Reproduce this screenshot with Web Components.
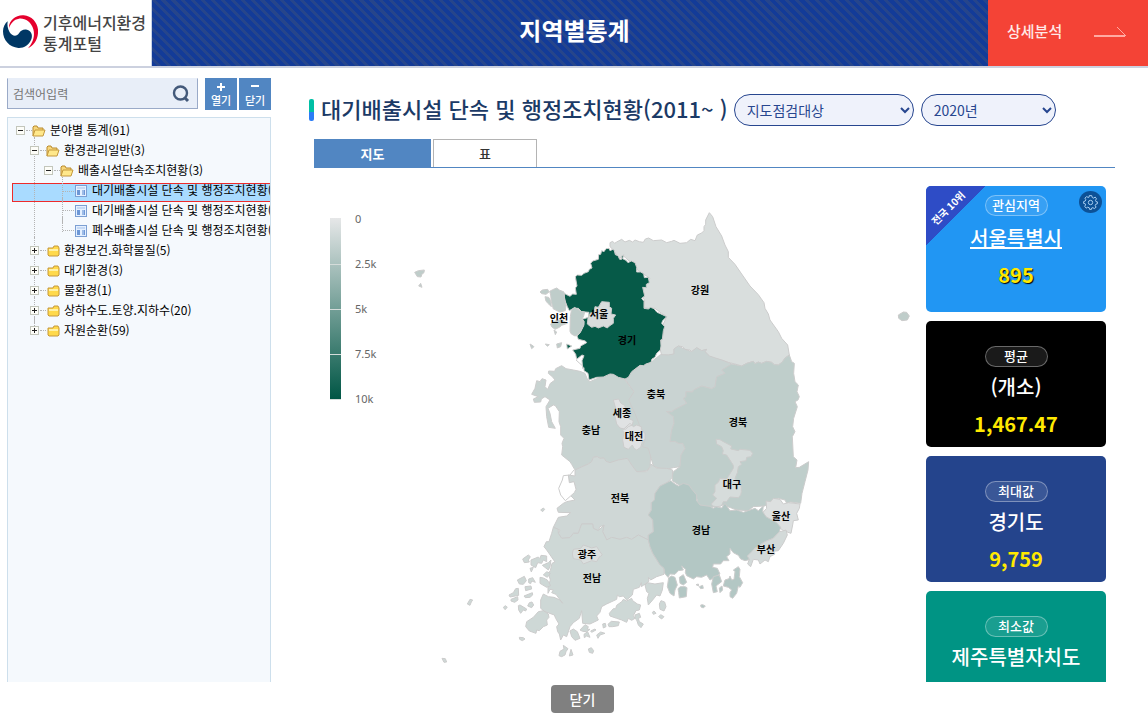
<!DOCTYPE html>
<html lang="ko">
<head>
<meta charset="utf-8">
<title>지역별통계</title>
<style>
  html, body { margin: 0; height: 100%; }
  body { font-family: "Noto Sans CJK KR", "Noto Sans", sans-serif; color: #000; background: #fff; overflow: hidden; }
</style>
</head>
<body>
<portal-app>
  <portal-header slot="header">
    <span slot="brand">기후에너지환경<br>통계포털</span>
    <span slot="title">지역별통계</span>
    <span slot="action">상세분석</span>
  </portal-header>

  <search-bar slot="side" placeholder="검색어입력"></search-bar>
  <tree-panel slot="side">
    <tree-item kind="open" depth="0" label="분야별 통계(91)">
      <tree-item kind="open" depth="1" guide label="환경관리일반(3)">
        <tree-item kind="open" depth="2" label="배출시설단속조치현황(3)">
          <tree-item kind="leaf" depth="3" guide selected label="대기배출시설 단속 및 행정조치현황(2011~ )"></tree-item>
          <tree-item kind="leaf" depth="3" guide label="대기배출시설 단속 및 행정조치현황(2001~2010)"></tree-item>
          <tree-item kind="leaf" depth="3" guide="end" label="폐수배출시설 단속 및 행정조치현황(2001~ )"></tree-item>
        </tree-item>
      </tree-item>
      <tree-item kind="closed" depth="1" guide label="환경보건.화학물질(5)"></tree-item>
      <tree-item kind="closed" depth="1" guide label="대기환경(3)"></tree-item>
      <tree-item kind="closed" depth="1" guide label="물환경(1)"></tree-item>
      <tree-item kind="closed" depth="1" guide label="상하수도.토양.지하수(20)"></tree-item>
      <tree-item kind="closed" depth="1" guide="end" label="자원순환(59)"></tree-item>
    </tree-item>
  </tree-panel>

  <page-heading>대기배출시설 단속 및 행정조치현황(2011~ )
    <pill-select slot="tools" name="항목" value="지도점검대상" style="--w:180px"></pill-select>
    <pill-select slot="tools" name="연도" value="2020년" style="--w:135px"></pill-select>
  </page-heading>
  <tab-strip></tab-strip>
  <stat-board>
    <korea-map slot="map"></korea-map>
    <stat-card featured style="--bg:#2196f3;--shadow:#000">
      <span slot="rank">전국 10위</span><span slot="tag">관심지역</span><a slot="name" href="#seoul" style="color:inherit">서울특별시</a><span slot="value">895</span>
    </stat-card>
    <stat-card style="--bg:#000">
      <span slot="tag">평균</span><span slot="name">(개소)</span><span slot="value">1,467.47</span>
    </stat-card>
    <stat-card style="--bg:#24448c">
      <span slot="tag">최대값</span><span slot="name">경기도</span><span slot="value">9,759</span>
    </stat-card>
    <stat-card style="--bg:#009484">
      <span slot="tag">최소값</span><span slot="name">제주특별자치도</span><span slot="value"></span>
    </stat-card>
  </stat-board>
  <close-button slot="footer">닫기</close-button>
</portal-app>

<script>
const define = (name, html, setup) => {
  const t = document.createElement('template');
  t.innerHTML = html;
  customElements.define(name, class extends HTMLElement {
    constructor() {
      super();
      this.attachShadow({ mode: 'open' }).append(t.content.cloneNode(true));
    }
    connectedCallback() { if (setup) setup(this, this.shadowRoot); }
  });
};

define('portal-app', `
<style>
  :host { display: flex; flex-direction: column; height: 100vh; }
  .body { display: flex; flex: 1; min-height: 0; padding-top: 10px; }
  aside { display: flex; flex-direction: column; flex: 0 0 264px; min-width: 0; margin-left: 7px; gap: 7px; min-height: 0; }
  main { flex: 1; min-width: 0; overflow: hidden; padding: 0 33px 0 38px; }
  footer { display: flex; justify-content: center; flex: 0 0 32px; padding: 3px 0 0 17px; }
</style>
<slot name="header"></slot>
<div class="body"><aside><slot name="side"></slot></aside><main><slot></slot></main></div>
<footer><slot name="footer"></slot></footer>`);

define('portal-header', `
<style>
  :host { display: flex; flex: none; height: 66px; border-bottom: 2px solid #ccd1df; color: #fff; }
  .brand { display: flex; align-items: center; gap: 5px; flex: 0 0 148px; padding-left: 3px; border-right: 1px solid #c9d2e6; background: #fff; color: #444; font-size: 16px; line-height: 21px; font-weight: 500; white-space: nowrap; }
  .brand svg { flex: none; margin-bottom: 4px; }
  h1 { flex: 1; margin: 0; padding-left: 9px; font-size: 24px; line-height: 60px; font-weight: 700; text-align: center;
    background: repeating-linear-gradient(45deg, #133b98 0 4px, #26458b 4px 7px); }
  a { display: flex; align-items: center; justify-content: space-between; box-sizing: border-box; flex: 0 0 160px; padding: 0 22px 6px 19px; background: #f44336; color: #ffe9e7; font-size: 15px; font-weight: 500; text-decoration: none; }
  a svg { margin-top: 4px; }
</style>
<div class="brand">
  <svg width="35" height="35" viewBox="0 0 105 105" aria-hidden="true">
    <path d="M18 42C17 18 40 2 62 4C90 6 108 32 105 58C103 80 90 97 75 103C88 88 97 68 91 46C85 24 66 12 48 14C32 16 24 28 18 42Z" fill="#e5002d"/>
    <path d="M14 22C12 32 14 45 20 55C28 68 42 68 48 58C54 48 62 45 72 47C84 50 90 62 85 76C78 94 62 103 46 102C19 100 0 78 0 52C0 40 6 28 14 22Z" fill="#003764"/>
  </svg>
  <slot name="brand"></slot>
</div>
<h1><slot name="title"></slot></h1>
<a href="#detail"><slot name="action"></slot>
  <svg width="32" height="12" viewBox="0 0 32 12" fill="none" stroke="#ffaaa2" aria-hidden="true"><path d="M0 10H31" stroke-width="2"/><path d="M23 1L32 10"/></svg>
</a>`);

define('search-bar', `
<style>
  :host { display: flex; gap: 2px; height: 32px; flex: none; }
  form { display: flex; align-items: center; flex: 1; height: 29px; margin-right: 5px; background: #e8eef8; border: 1px solid #9aaac8; border-top-color: #e8eef8; }
  input { flex: 1; min-width: 0; border: 0; background: none; padding: 0 0 0 5px; font: 12px "Noto Sans CJK KR", sans-serif; outline: 0; }
  input::placeholder { color: #757575; }
  button { border: 0; padding: 0; color: #fff; font: 500 11px/15px "Noto Sans CJK KR", sans-serif; }
  form button { background: none; width: 24px; height: 20px; margin-right: 4px; }
  .b { display: flex; flex-direction: column; align-items: center; width: 32px; background: #5186c2; padding-top: 5px; gap: 2px; }
  svg { display: block; margin: auto; }
  .b svg { margin: 0; }
</style>
<form><input type="text" id="q" aria-label="검색어입력"><button type="button" aria-label="검색">
  <svg width="18" height="18" viewBox="0 0 18 18" fill="none" stroke="#43597a" stroke-width="2.400"><circle cx="8.500" cy="8" r="6.500"/><path d="M13 13L16 16" stroke-width="3"/></svg></button></form>
<button class="b" type="button"><svg width="8" height="8" viewBox="0 0 8 8"><path d="M0 3H3V0H5V3H8V5H5V8H3V5H0Z" fill="#fff"/></svg>열기</button>
<button class="b" type="button"><svg width="8" height="8" viewBox="0 0 8 8"><path d="M0 2H8V4H0Z" fill="#fff"/></svg>닫기</button>`,
(el, r) => { r.querySelector('input').placeholder = el.getAttribute('placeholder'); });

define('tree-panel', `
<style>
  :host { display: block; flex: 1; min-height: 0; overflow: hidden; border: 1px solid #cddfec; border-bottom: 0; background: #f5f9fd; padding: 5px 0 0 4px; }
</style><div role="tree"><slot></slot></div>`);

const openFolder = `<svg width="14" height="12" viewBox="0 0 14 12"><path d="M1 11V2L2 1H5L6 3H11V5" fill="#f7d77c" stroke="#b98a2c"/><path d="M1 11L3 5H13L11 11Z" fill="#ffe88b" stroke="#c4983c"/></svg>`;
const shutFolder = `<svg width="13" height="12" viewBox="0 0 13 12"><path d="M1 10V3H6L7 1H11L12 3V10L11 11H2Z" fill="#ffd94a" stroke="#c4983c"/><path d="M2 5H11" stroke="#fff1a6" stroke-width="2"/></svg>`;
const sheet = `<svg width="12" height="12" viewBox="0 0 12 12"><rect x=".5" y=".5" width="11" height="11" fill="#e4f0ff" stroke="#7c9fd3"/><path d="M2 3H10" stroke="#a5c1ea" stroke-width="1"/><path d="M2 5H5V10H2ZM7 5H10V10H7Z" fill="#6d97d6"/><path d="M8 5V10" stroke="#cfe0f8"/></svg>`;

define('tree-item', `
<style>
  :host { display: block; position: relative; }
  .row { display: flex; align-items: flex-start; box-sizing: border-box; height: 20px; white-space: nowrap; font-size: 12px; line-height: 14px;
    padding-left: calc(var(--d) * 14px + 4px); margin-left: calc(var(--d) * -14px); }
  .sel { background: #a9dbff; border: 1px solid #ee2b2b; border-right: 0; height: 19px; margin-bottom: 1px; line-height: 12px; padding-left: calc(var(--d) * 14px + 3px); }
  .mark { width: 9px; height: 9px; margin: 3px 1px 0 0; padding: 0; border: 0; background: none; display: block; position: relative; z-index: 2; }
  .mark svg { display: block; }
  .dash { flex: none; width: 6px; margin-top: 7px; border-top: 1px dotted #b4b4b4; }
  .leaf .mark { visibility: hidden; flex: none; }
  .leaf .dash { width: 11px; margin-left: -5px; }
  .icon { display: flex; flex: none; justify-content: center; width: 14px; margin: 2px 4px 0 0; }
  .sel .icon { margin-top: 1px; }
  a { color: #000; text-decoration: none; }
  .kids { margin-left: 14px; }
  :host([guide])::before { content: ""; position: absolute; z-index: 1; left: 8px; top: -6px; bottom: 0; border-left: 1px dotted #b4b4b4; }
  :host([guide="end"])::before { bottom: 11px; }
</style>
<div class="row" role="treeitem"><button class="mark" type="button" aria-label="펼치기"></button><span class="dash"></span><span class="icon"></span><a href="#item"></a></div>
<div class="kids"><slot></slot></div>`,
(el, r) => {
  const kind = el.getAttribute('kind');
  const row = r.querySelector('.row');
  row.style.setProperty('--d', el.getAttribute('depth'));
  if (kind === 'leaf') row.classList.add('leaf');
  if (el.hasAttribute('selected')) row.classList.add('sel');
  r.querySelector('a').textContent = el.getAttribute('label');
  r.querySelector('.icon').innerHTML = { open: openFolder, closed: shutFolder, leaf: sheet }[kind];
  if (kind !== 'leaf') r.querySelector('.mark').innerHTML =
    `<svg width="9" height="9"><rect x=".5" y=".5" width="8" height="8" fill="#fdfdf8" stroke="#c3c6bb"/><path d="M2 4.500H7${kind === 'closed' ? 'M4.500 2V7' : ''}" stroke="#222"/></svg>`;
});

define('page-heading', `
<style>
  :host { display: flex; align-items: center; height: 32px; margin-top: 16px; }
  i { flex: none; width: 5px; height: 22px; margin-right: 7px; border-radius: 2px; background: linear-gradient(#00bfa5 60%, #2b7cf6 60%); }
  h2 { margin: 0 6px 4px 0; color: #1b3a66; font-size: 22px; line-height: 28px; font-weight: 500; white-space: nowrap; }
  .tools { display: flex; gap: 7px; }
</style><i></i><h2><slot></slot></h2><div class="tools"><slot name="tools"></slot></div>`);

define('pill-select', `
<style>
  :host { display: block; width: var(--w); }
  select { width: 100%; height: 32px; box-sizing: border-box; padding: 0 0 0 8px; border: 1px solid #27468f; border-radius: 16px; background: #eff2fb; color: #27468f; font: 14px "Noto Sans CJK KR", sans-serif; }
</style><select><option></option></select>`,
(el, r) => {
  r.querySelector('select').setAttribute('aria-label', el.getAttribute('name'));
  r.querySelector('option').textContent = el.getAttribute('value');
});

define('tab-strip', `
<style>
  :host { display: flex; gap: 2px; margin: 13px 0 0 5px; border-bottom: 1px solid #5186c2; }
  button { box-sizing: border-box; height: 28px; padding: 0; border: 1px solid #b4b4b4; border-bottom: 0; background: #fff; color: #333; font: 500 13px/18px "Noto Sans CJK KR", sans-serif; width: 104px; }
  .on { width: 117px; background: #5186c2; border-color: #5186c2; color: #fff; font-weight: 700; }
</style><button class="on" type="button" role="tab" aria-selected="true">지도</button><button type="button" role="tab">표</button>`);

define('stat-board', `
<style>
  :host { display: flex; align-items: flex-start; margin: 18px 9px 0 5px; }
  .map { flex: 1; min-width: 0; }
  .cards { display: flex; flex-direction: column; gap: 9px; flex: 0 0 180px; }
</style><div class="map"><slot name="map"></slot></div><div class="cards"><slot></slot></div>`);

define('stat-card', `
<style>
  :host { display: flex; flex-direction: column; align-items: center; position: relative; box-sizing: border-box; height: 126px; padding-top: 25px; border-radius: 5px; overflow: hidden; background: var(--bg); color: #fff; gap: 5px; }
  :host([featured]) { padding-top: 9px; gap: 7px; }
  .tag { box-sizing: border-box; width: 63px; height: 21px; border: 1px solid rgba(255,255,255,.35); border-radius: 11px; background: rgba(255,255,255,.1); font-size: 13px; line-height: 18px; font-weight: 500; text-align: center; }
  .name { font-size: 20px; line-height: 30px; font-weight: 500; }
  .value { margin-top: 2px; color: #ffe900; font-size: 20px; line-height: 30px; font-weight: 700; text-shadow: 1px 1px 1px var(--shadow, transparent); }
  :host([featured]) .value { margin-top: 0; }
  .ribbon, button { display: none; }
  :host([featured]) .ribbon { display: flex; align-items: center; justify-content: center; position: absolute; left: 0; top: 0; width: 60px; height: 60px; background: linear-gradient(135deg, #2e4cc6 50%, transparent 50%); }
  .ribbon span { transform: translate(-8px, -8px) rotate(-45deg); font-size: 10px; line-height: 12px; font-weight: 700; white-space: nowrap; }
  :host([featured]) button { display: flex; align-items: center; justify-content: center; position: absolute; right: 4px; top: 5px; width: 23px; height: 22px; padding: 0; border: 0; border-radius: 50%; background: #0c5197; }
</style>
<div class="ribbon"><span><slot name="rank"></slot></span></div>
<button type="button" aria-label="설정"><svg width="15" height="15" viewBox="0 0 24 24" fill="none" stroke="#a8cdf0" stroke-width="1.600"><circle cx="12" cy="12" r="3.500"/><path d="M10 1H14L14.700 4L17 5L19.500 3.300L21.500 6L20 8.500L20.700 10.500L23 11V14L20.500 14.700L19.500 17L21 19.500L18 21.700L15.800 20.200L14 20.700L13.500 23H10.500L10 20.500L7.500 19.500L5 21L2.700 18L4.200 15.800L3.500 14L1 13.500V10.500L3.500 9.700L4.500 7.500L3 5L6 2.500L8.200 4L9.700 3.500Z"/></svg></button>
<div class="tag"><slot name="tag"></slot></div>
<div class="name"><slot name="name"></slot></div>
<div class="value"><slot name="value"></slot></div>`);

const P = (fill, d) => `<path fill="${fill}" d="${d}"/>`;
const labels = [['강원',700,290],['서울',599,314],['인천',559,318],['경기',627,340],['충북',656,394],['세종',622,413],['대전',634,436],['충남',591,430],['경북',738,422],['대구',732,484],['전북',620,498],['울산',781,516],['경남',701,530],['부산',766,549],['광주',587,554],['전남',592,578]];
define('korea-map', `
<style>
  :host { display: block; }
  svg { display: block; width: 100%; height: 496px; }
  .land { stroke: #ccc; stroke-width: 3; stroke-linejoin: round; }
  .names text { font: 700 10px "Noto Sans CJK KR", sans-serif; text-anchor: middle; fill: #000; }
  .scale text { font: 11px "Noto Sans", sans-serif; fill: #666; }
</style>
<svg viewBox="314 186 612 496" role="img" aria-label="시도별 지도">
  <defs><linearGradient id="g" x1="0" y1="0" x2="0" y2="1"><stop offset="0" stop-color="#e6e7e8"/><stop offset="1" stop-color="#005645"/></linearGradient></defs>
  <rect x="330" y="218" width="11" height="181" fill="url(#g)"/>
  <path d="M330 264.500H341M330 309.500H341M330 354.500H341M330 399.500H341" stroke="#d5dcda"/>
  <g class="scale"><text x="355" y="223">0</text><text x="355" y="268">2.5k</text><text x="355" y="313">5k</text><text x="355" y="358">7.5k</text><text x="355" y="403">10k</text></g>
  <g class="land" transform="translate(520 200) scale(.333333)">
    ${P('#bfcdca','M-316 217L-305 212L-287 210L-288 218L-294 222L-297 231L-308 230ZM-304 258L-298 250L-294 262ZM1135 345L1150 336L1160 337L1168 348L1162 360L1146 362L1136 355Z')}
    ${P('#d9dedd','M270 128L278 124L284 130L290 126L305 118L315 126L328 121L338 126L345 120L358 125L370 127L376 117L386 114L400 122L425 120L440 128L455 124L462 121L480 130L500 128L512 118L525 122L532 105L545 99L552 92V80L557 73V60L568 38L578 50L588 80L605 108L615 135L625 155V172L645 193L665 222L690 258L715 284L732 308L735 325L745 342L750 360L775 395L785 415L803 435L808 465L795 474L787 486L775 495L763 494L755 487L740 484L725 490L715 486L705 491L700 484L680 490L665 498L645 492L625 487L605 480L585 476L568 468L555 455L560 448L545 452L530 443L515 455L510 450L495 448L488 440L475 438L462 447V462L445 465L425 466L421 450V430L430 400V372L440 350L425 340L405 325L385 325L372 322L374 300L365 290L370 264L390 235L375 225L365 218L352 210L345 188L330 185L318 175L308 165L300 175L290 165L280 150L270 140Z')}
    ${P('#c8d3d1','M125 497L138 506L160 510L180 514L195 520L203 540L210 545L240 532L270 522L300 530L315 540L330 560L342 575L330 598L345 640L375 680L378 740L385 745L392 765L390 800L380 812L350 815L335 795L322 775L295 780L270 788L258 784L252 774L240 775L232 770L220 772L215 785L205 792L185 800L165 810L155 793L150 785L125 765L128 740L126 730L132 715L122 705L122 680L117 665L118 635L106 617L100 615L84 625L90 640L95 665L106 685L86 682L80 650L78 620L90 600L75 590L64 597L62 606L43 607L40 597L55 590L35 583L45 565L50 542L60 545L66 536L78 540L75 560L83 568L91 550L105 540L97 530L85 520L86 513L104 514L107 506Z')}
    ${P('#c9d3d2','M315 537L335 517L360 499L395 485L421 464L445 465L462 462V447L475 438L495 448L515 455L530 443L545 452L560 448L555 455L568 468L605 480L635 492L627 500L605 510L615 520L590 530L585 560L575 566L545 558L520 570L518 576L498 575V590L490 595L500 610L465 628L455 635L440 635L460 650L462 670L455 690L450 725L465 724L475 730L488 730L495 745L483 765L480 800L460 803L440 808L415 804L400 798L385 745L367 740L375 720V700L360 680L345 640L326 600L342 575Z')}
    ${P('#bfcecb','M635 492L665 498L680 490L700 484L705 491L715 486L725 490L740 484L755 487L763 494L775 495L787 486L795 474L808 465L815 485L823 490L821 520L825 545L835 555L831 575L838 590L834 600L825 605L832 620L821 655L818 680L825 695L817 710L820 770L831 780L827 803L838 802L866 785L864 810L855 845L846 880L842 910L810 906L800 910L795 900L775 895L750 905L735 918L700 920L685 932L650 930L610 915L590 920L570 922L530 915L532 898L528 895L515 878L500 870L457 842V828L460 815L480 800L483 765L495 745L488 730L475 730L465 724L450 725L455 690L462 670L460 650L440 635L455 635L465 628L500 610L490 595L498 590V575L518 576L520 570L545 558L575 566L585 560L590 530L615 520L605 510Z')}
    ${P('#065a48','M245 152L252 155L258 146L267 145L270 152L279 148L283 152L286 164L294 167L299 178H305V170L311 164L308 176L318 181L324 188L334 183L345 188L350 202V216H362L371 221L373 233L385 232L388 248L379 253V263L368 262L374 288L365 295L372 304V325L385 327L392 322L402 326L411 337L421 341L440 350L428 362L425 370L434 380L430 392L427 418L422 420L423 438L421 450L410 460L405 472L396 477L393 487L378 492L370 497L360 496L335 515L325 532L315 537L295 532L280 523L270 522L250 531L230 532L207 540L204 520L192 512V503L188 505L186 482L192 467L186 465L170 478L167 463L158 450L180 445L182 438L200 428L196 423L175 418L171 408L180 398L192 375V364L187 358L205 352L207 337L185 335L175 325L160 325L148 332L142 320L134 300L132 280L150 289L158 282L169 283L166 264L171 258L166 230L172 225L185 226L192 220L205 215L208 208L216 204L212 190L218 183L235 178L236 164L242 163Z')}
    ${P('#d8dcdc','M245 305L268 307V320L275 325L273 342L287 345L280 355V370L268 378L262 384L250 378L235 384L225 379L215 382L202 372L204 354L212 338L222 340L225 320L235 322Z')}
    ${P('#bfcdca','M92 285L89 274L98 269L110 264L118 270L132 276L133 290L138 315L136 332L120 336L100 327L94 305ZM60 276L67 270L83 268L87 276L78 283L65 281ZM75 290L86 292L92 302L94 320L86 312L78 304ZM151 350L154 332L163 322L173 327L185 335L194 336L191 348L185 360L192 364L190 378L182 395L175 404L165 408L154 402L150 394ZM92 372L105 363L125 359L142 370L125 376L118 382L105 388L95 380ZM102 390L110 396L106 404ZM30 432L40 438L42 440L35 446ZM76 432L88 434L82 439ZM110 432L125 428L122 440L112 444Z')}
    <path fill="#065a48" d="M140 432L155 438L142 447Z"/><path fill="none" d="M168 480L188 498L188 505"/>
    ${P('#e0e2e3','M280 600L296 597L303 610L314 616L318 630L325 655L340 662L337 675L325 680L316 688L300 684L290 672L284 645L287 625ZM330 670L340 680L350 675L364 680V690L375 700V718L367 725L362 742L350 750L342 745L337 735L325 748L312 742L308 720L312 700L308 690Z')}
    ${P('#d6dcdb','M588 718L600 719L610 725L635 738L632 747L655 752L660 748L690 751L698 760L693 770L680 772L678 782L660 785L665 793L655 800L652 818L645 835L664 860V875L662 885L655 893L630 891L620 905L610 905L604 918L590 920L578 918L574 912L590 895L578 885L585 875V855L595 847L600 835L620 837L640 805V796L635 788L620 765L607 762L610 752L605 740L590 732Z')}
    ${P('#dde0e0','M738 903L752 905L760 895L780 898L790 912L805 908L840 912L838 925L830 940L835 960L820 962L818 975L813 1000L790 992L775 980L760 965L740 960L735 945L728 938L740 925Z')}
  </g>
  <g class="land" transform="translate(430 480) scale(.333333)">
    ${P('#cfd7d6','M435 -30L475 -48L485 -55L490 -68L502 -70L510 -65L522 -66L528 -56L540 -52L565 -60L592 -65L605 -45L620 -25L650 -25L662 -40V-48L680 -36L710 -35L728 -30L727 -8L710 10L690 18L675 40L673 60L664 68V90L655 105L668 120L670 155L655 165V180L625 165L605 178L590 172L570 178L545 172L530 180L525 168L518 155L522 135L510 140L505 152L490 145L488 132H455L450 145L445 160L430 160L420 173L395 175L385 160L390 150L370 142L385 112L410 108L422 98L385 97L381 85L400 70L410 65L435 60L420 45L438 28L432 5L418 8L415 -15L435 -12Z')}
    <path fill="#fff" d="M432 -30L420 -15L400 -13L397 0L386 25L392 45L406 62L423 47L433 38L438 28L432 5L418 8L415 -15"/>
    ${P('#ced8d6','M370 142L385 148L385 160L395 175L420 173L430 160H445L455 132H488L490 145L505 152L522 135L518 155L530 180L545 172L570 178L590 172L605 178L625 165L655 180L660 200L668 220L690 255L702 265V283L680 290L662 300L655 292L657 304L634 320V308L628 322L610 328L607 345L590 360L580 348L568 350L562 345L560 358L530 372L515 380L510 397L500 408L505 420L480 432L458 430L455 392L448 415L430 428L420 440L410 470L400 465L392 480L388 462L383 455L380 440L387 432L377 415L373 405L345 395L332 385V360L340 342L355 350L372 352L390 360L398 370L378 343L365 338L370 330L360 328L354 340V320L361 300L355 280L361 272L366 250L375 246L350 210L342 200L349 185H357L365 160Z')}
    ${P('#b3c7c4','M722 2L735 12L745 18L760 10L777 15L785 27L800 45V62L810 75L840 79L850 85L858 80L875 84L885 70L900 92L920 90L940 97L960 90L975 85L985 92L1000 78L998 95L1008 110L1040 128L1052 142L1048 155L1030 175L1005 185L975 205L962 225L962 238L945 242L932 237L925 226L910 218L900 205V222L890 230L897 242H880L872 252L850 252L848 262L862 265L870 282L840 300L830 285L815 292L800 290L790 297L770 287L766 278L767 268L755 258L760 270L745 272L735 283L720 282L714 292L704 280L702 265L690 255L668 220L660 200L655 180V165L670 155L668 120L655 105L664 90V68L673 60L675 40L690 18Z')}
    ${P('#b3c7c4','M716 293L725 288L735 292L742 315L735 330L732 348L720 340L712 320ZM744 326L751 320L765 320L771 323L769 350L748 354L746 338ZM750 310L748 292L760 284L765 295L770 307L760 315ZM798 314L805 312L806 318ZM808 320L818 316L820 325L812 326ZM850 290L868 285L875 305L858 318L862 335L850 338L845 312ZM868 324L876 318L878 330L870 338ZM885 300L897 296L900 288L905 300L912 298L915 275L910 270L925 260L930 268L928 290L938 308L930 322L925 318L920 340L908 355L900 350V338L905 330L895 322L880 318L882 310ZM812 375L818 374L826 378L820 384L813 381Z')}
    ${P('#d3dad9','M1068 150L1072 165L1060 190L1045 212L1030 214L1035 222L1020 230L1015 245L1005 240L990 252L985 240L970 238L962 260L953 252L958 238L952 228L975 205L1005 185L1030 175L1048 155L1058 153Z')}
    ${P('#dadfde','M430 208L452 205L460 195L475 200L485 204L500 200L510 215L517 225L507 232L500 245L485 242L460 252L452 240L430 236L427 222Z')}
    ${P('#ced8d6','M278 237L295 225L301 230L295 240L298 246L283 248ZM303 240L325 231L330 236L333 226L350 228V245L340 240L335 250L323 248L317 263L303 255ZM355 248L363 240L360 260L355 270L337 256ZM300 265L310 262L304 276ZM262 300L283 289L289 302L280 313L268 312ZM296 297L308 293L316 307L305 303L302 311L296 308ZM340 285L350 275L361 280L352 292ZM330 292L340 294L352 300L362 317L350 322L330 310ZM237 345L250 338L257 326L265 325L266 346L240 351ZM285 320L303 318L305 327L287 332ZM282 348L307 338L308 345L300 352L286 353ZM243 358L263 350L264 360L254 367L243 363ZM220 382L226 377L232 382L225 389ZM298 368L306 366L311 375L305 383L293 378ZM265 377L270 375L290 387L287 393L280 390L272 400L266 390ZM287 440L290 425L310 412L325 395L340 392L355 402L357 412L350 420L352 435L340 440L328 452L320 450L318 460L298 453ZM268 472L280 473L285 477L277 482L269 478ZM420 453L430 447L442 455L450 475L435 481L425 470ZM450 450L465 434L475 440L472 448L480 448L470 455L458 454ZM462 463L473 455L480 472L470 468L463 473ZM482 453L495 447L498 450L485 457ZM500 465L512 456L525 460L510 465L504 475ZM518 432L526 430L528 440L520 444ZM534 433L544 424L568 426L565 437L548 440L537 440ZM538 400L550 386H557L560 376L575 365L580 358L590 363L605 355L608 362L622 372L632 375L628 390L618 392L610 407L615 415L605 421L595 415L590 427L575 420L560 415L540 408ZM615 405L628 400L632 412L625 415L628 425L640 432L633 443L625 435L620 420L615 415ZM645 315L652 308L675 312L700 308L697 330L690 348L680 345L668 360L655 375L652 355L657 340L650 335ZM688 372L693 362L704 366L708 380L702 393L690 388ZM667 397L672 393L678 400L670 403ZM686 410L692 404L702 410L695 417ZM400 496L414 506L408 515L405 525L395 530L387 527L390 514L402 507ZM418 528L423 508L429 525ZM475 507L484 503L491 512L488 520L478 517ZM332 90L340 84L344 88L338 95ZM112 372L120 358L128 360L124 366L120 376ZM36 535L46 536L50 546L42 547Z')}
  </g>
  <g class="names">${labels.map(([t, x, y]) => `<text x="${x}" y="${y + 4}">${t}</text>`).join('')}</g>
</svg>`);

define('close-button', `
<style>
  :host { display: block; }
  button { width: 63px; height: 28px; padding: 0; border: 0; border-radius: 4px; background: #808080; color: #fff; font: 500 14px/20px "Noto Sans CJK KR", sans-serif; }
</style><button type="button"><slot></slot></button>`);
</script>
</body>
</html>
